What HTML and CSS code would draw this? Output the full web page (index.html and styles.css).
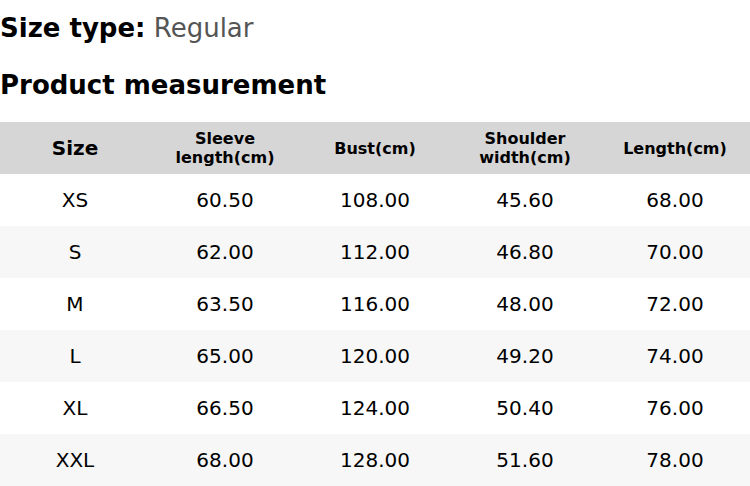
FILE: index.html
```html
<!DOCTYPE html>
<html>
<head>
<meta charset="utf-8">
<link rel="stylesheet" href="styles.css">
</head>
<body>
<div class="page">
  <h2 class="size-type"><span class="label">Size type:</span> <span class="value">Regular</span></h2>
  <h2 class="title">Product measurement</h2>
  <table class="chart">
    <thead>
      <tr>
        <th class="big">Size</th>
        <th>Sleeve<br>length(cm)</th>
        <th>Bust(cm)</th>
        <th>Shoulder<br>width(cm)</th>
        <th>Length(cm)</th>
      </tr>
    </thead>
    <tbody>
      <tr><td>XS</td><td>60.50</td><td>108.00</td><td>45.60</td><td>68.00</td></tr>
      <tr><td>S</td><td>62.00</td><td>112.00</td><td>46.80</td><td>70.00</td></tr>
      <tr><td>M</td><td>63.50</td><td>116.00</td><td>48.00</td><td>72.00</td></tr>
      <tr><td>L</td><td>65.00</td><td>120.00</td><td>49.20</td><td>74.00</td></tr>
      <tr><td>XL</td><td>66.50</td><td>124.00</td><td>50.40</td><td>76.00</td></tr>
      <tr><td>XXL</td><td>68.00</td><td>128.00</td><td>51.60</td><td>78.00</td></tr>
    </tbody>
  </table>
</div>
</body>
</html>
```
FILE: styles.css
```css
html, body {
  margin: 0;
  padding: 0;
  background: #fff;
}
.page {
  font-family: "DejaVu Sans", sans-serif;
  color: #000;
  width: 750px;
}
.size-type {
  margin: 0;
  padding-top: 11px;
  font-size: 26px;
  line-height: 34px;
  font-weight: normal;
}
.size-type .label {
  font-weight: bold;
}
.size-type .value {
  color: #555;
}
.title {
  margin: 0;
  margin-top: 23px;
  font-size: 26px;
  line-height: 34px;
  font-weight: bold;
}
.chart {
  margin-top: 20px;
  width: 750px;
  border-collapse: collapse;
  table-layout: fixed;
}
.chart th {
  background: #d6d6d6;
  height: 52px;
  padding: 0;
  font-size: 16px;
  line-height: 19px;
  font-weight: bold;
  text-align: center;
}
.chart th.big {
  font-size: 20px;
}
.chart td {
  height: 52px;
  padding: 0;
  font-size: 20px;
  text-align: center;
}
.chart tbody tr:nth-child(even) td {
  background: #f7f7f7;
}
```
